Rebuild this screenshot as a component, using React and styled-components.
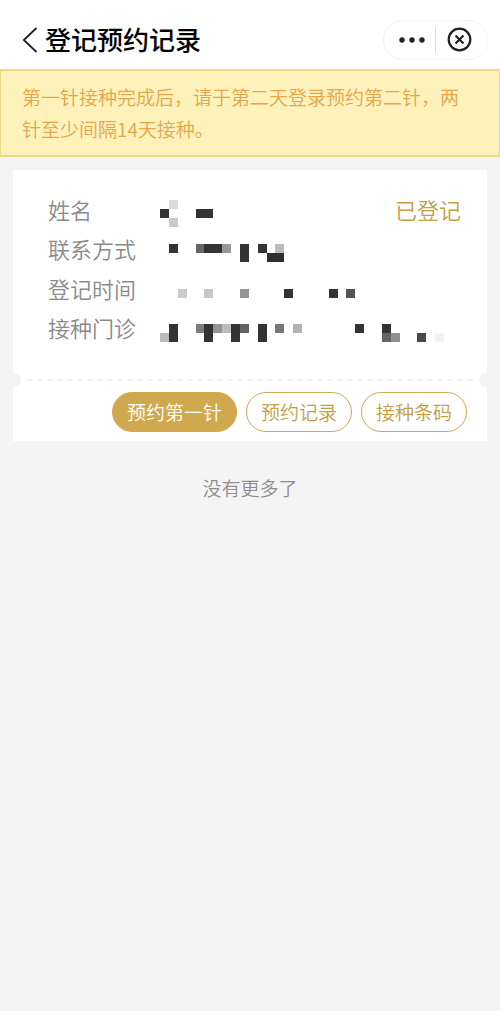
import React from 'react'
import styled, { createGlobalStyle } from "styled-components"

const GlobalStyle = createGlobalStyle`
    * {
        box-sizing: border-box;
    }

    body {
        margin: 0;
        background-color: #f4f4f4;
        font-family: "Noto Sans CJK SC", sans-serif;
        font-weight: 350;
    }

    button {
        font-family: inherit;
        font-weight: inherit;
        cursor: pointer;
    }
`

const Header = styled.header`
    background-color: #fff;
    display: flex;
    align-items: center;
    height: 69px;
    padding: 10px 12px 0 22px;

    h1 {
        flex: 1;
        margin: 0;
        padding-bottom: 2px;
        font-size: 26px;
        line-height: 36px;
        font-weight: 500;
        color: #000;
    }
`

const IconButton = styled.button`
    display: flex;
    align-items: center;
    justify-content: center;
    width: ${({ $width }) => $width}px;
    height: 38px;
    padding: 0;
    border: none;
    background: none;
`

const Capsule = styled.div`
    display: flex;
    align-items: center;
    width: 105px;
    height: 40px;
    border: 1px solid #f2f2f2;
    border-radius: 20px;
    padding-left: 4px;
`

const Divider = styled.span`
    width: 1px;
    height: 25px;
    background-color: #d9d9d9;
`

const Notice = styled.p`
    margin: 0;
    padding: 10px 22px 10px 21px;
    border: 2px solid #ecd887;
    border-left-width: 1px;
    border-right-width: 1px;
    background-color: #fef2ba;
    font-size: 19px;
    line-height: 32px;
    color: #e5a54b;
`

const Card = styled.section`
    position: relative;
    margin: 13px 13px 0;
    background-color: #fff;
`

const Details = styled.div`
    display: flex;
    padding: 25px 35px 37px;
`

const Labels = styled.dl`
    display: flex;
    flex-direction: column;
    justify-content: space-between;
    width: 112px;
    margin: 0;
    padding-bottom: 1px;
    font-size: 22px;
    line-height: 28px;
    color: #8a8a8a;
`

const Pixels = styled.svg`
    width: 284px;
    height: 147px;
    padding-top: 5px;
`

const Status = styled.span`
    position: absolute;
    top: 25px;
    right: 26px;
    font-size: 22px;
    line-height: 28px;
    color: #c49e44;
`

const Perforation = styled.div`
    position: relative;
    margin: 0 14px;
    border-top: 2px dashed #f2f2f2;

    &::before,
    &::after {
        content: "";
        position: absolute;
        top: -8px;
        width: 14px;
        height: 14px;
        border-radius: 50%;
        background-color: #f4f4f4;
    }

    &::before {
        left: -20px;
    }

    &::after {
        right: -20px;
    }
`

const Actions = styled.div`
    display: flex;
    justify-content: flex-end;
    gap: 9px;
    padding: 11px 20px 9px;
`

const Pill = styled.button`
    height: 40px;
    padding: 0 14px;
    border: 1px solid ${({ $filled }) => ($filled ? "#d0a94f" : "#c9a95c")};
    border-radius: 20px;
    background-color: ${({ $filled }) => ($filled ? "#d0a94f" : "#fff")};
    color: ${({ $filled }) => ($filled ? "#fff" : "#c49e44")};
    font-size: 19px;
    line-height: 28px;
    white-space: nowrap;
`

const End = styled.p`
    margin: 33px 0 0;
    text-align: center;
    font-size: 19px;
    line-height: 28px;
    color: #8e8e8e;
`

const labels = ["姓名", "联系方式", "登记时间", "接种门诊"]

// masked values: [column, row, columns, rows, colour]
const cells = [
    [1, 0, 1, 1, "#dcdcdc"],
    [0, 1, 1, 1, "#333"],
    [4, 1, 2, 1, "#333"],
    [1, 2, 1, 1, "#c9c9c9"],

    [1, 5, 1, 1, "#333"],
    [4, 5, 1, 1, "#666"],
    [5, 5, 2, 1, "#333"],
    [7, 5, 1, 1, "#999"],
    [9, 5, 1, 2, "#333"],
    [11, 5, 1, 1, "#333"],
    [13, 5, 1, 1, "#bbb"],
    [12, 6, 2, 1, "#2e2e2e"],

    [2, 10, 1, 1, "#cbcbcb"],
    [5, 10, 1, 1, "#c6c6c6"],
    [9, 10, 1, 1, "#959595"],
    [14, 10, 1, 1, "#333"],
    [19, 10, 1, 1, "#333"],
    [21, 10, 1, 1, "#525252"],

    [0, 15, 1, 1, "#b9b9b9"],
    [1, 14, 1, 2, "#333"],
    [4, 14, 1, 1, "#7d7d7d"],
    [5, 14, 1, 2, "#333"],
    [6, 14, 1, 1, "#939393"],
    [7, 14, 1, 1, "#bcbcbc"],
    [8, 14, 1, 2, "#333"],
    [9, 14, 1, 1, "#626262"],
    [11, 14, 1, 2, "#333"],
    [13, 14, 1, 1, "#777"],
    [15, 14, 1, 1, "#b2b2b2"],
    [22, 14, 1, 1, "#333"],
    [25, 14, 1, 1, "#333"],
    [25, 15, 1, 1, "#666"],
    [26, 15, 1, 1, "#909090"],
    [29, 15, 1, 1, "#484848"],
    [31, 15, 1, 1, "#f3f3f3"],
]

function Mosaic() {
    return (
        <Pixels viewBox="0 0 32 16" preserveAspectRatio="none" shapeRendering="crispEdges" aria-hidden="true">
            {cells.map(([x, y, w, h, fill]) => (
                <rect key={`${x}-${y}`} x={x} y={y} width={w} height={h} fill={fill} />
            ))}
        </Pixels>
    )
}

export default function App() {
    return (
        <>
            <GlobalStyle />
            <Header>
                <IconButton $width={23} aria-label="返回">
                    <svg width="23" height="28" viewBox="0 0 23 28" fill="none" stroke="#222" strokeWidth="1.8">
                        <path d="M14.5 2 L1.8 14 L14.5 26" />
                    </svg>
                </IconButton>
                <h1>登记预约记录</h1>
                <Capsule>
                    <IconButton $width={47} aria-label="更多">
                        <svg width="28" height="8" viewBox="0 0 28 8" fill="#222">
                            <circle cx="4" cy="4" r="2.7" />
                            <circle cx="14" cy="4" r="2.7" />
                            <circle cx="24" cy="4" r="2.7" />
                        </svg>
                    </IconButton>
                    <Divider />
                    <IconButton $width={47} aria-label="关闭">
                        <svg width="26" height="26" viewBox="0 0 26 26" fill="none" stroke="#222" strokeWidth="2.2">
                            <circle cx="12.5" cy="12.5" r="10.8" />
                            <path d="M8.5 8.5 L16.5 16.5 M16.5 8.5 L8.5 16.5" />
                        </svg>
                    </IconButton>
                </Capsule>
            </Header>

            <Notice>第一针接种完成后，请于第二天登录预约第二针，两针至少间隔14天接种。</Notice>

            <Card>
                <Details>
                    <Labels>
                        {labels.map((label) => (
                            <dt key={label}>{label}</dt>
                        ))}
                    </Labels>
                    <Mosaic />
                </Details>
                <Status>已登记</Status>
                <Perforation />
                <Actions>
                    <Pill $filled>预约第一针</Pill>
                    <Pill>预约记录</Pill>
                    <Pill>接种条码</Pill>
                </Actions>
            </Card>

            <End>没有更多了</End>
        </>
    )
}
